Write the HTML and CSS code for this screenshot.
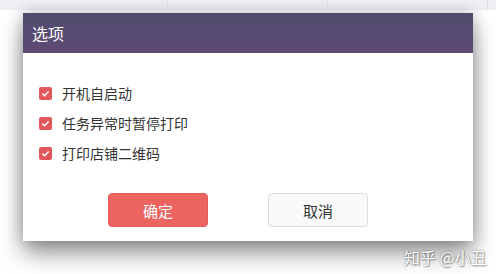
FILE: index.html
```html
<!DOCTYPE html>
<html>
<head>
<meta charset="utf-8">
<link rel="stylesheet" href="styles.css">
</head>
<body>
<div class="page">
  <div class="topbar">
    <div class="cell c1"></div>
    <div class="cell c2"></div>
    <div class="cell c3"></div>
    <div class="cell c4"></div>
  </div>
  <div class="dialog">
    <div class="dlg-head">选项</div>
    <div class="dlg-body">
      <label class="opt"><span class="cb"><svg viewBox="0 0 13 13" width="13" height="13"><path d="M3.4 6.6 L5.6 8.7 L9.6 4.4" fill="none" stroke="#fff" stroke-width="1.5"/></svg></span>开机自启动</label>
      <label class="opt"><span class="cb"><svg viewBox="0 0 13 13" width="13" height="13"><path d="M3.4 6.6 L5.6 8.7 L9.6 4.4" fill="none" stroke="#fff" stroke-width="1.5"/></svg></span>任务异常时暂停打印</label>
      <label class="opt"><span class="cb"><svg viewBox="0 0 13 13" width="13" height="13"><path d="M3.4 6.6 L5.6 8.7 L9.6 4.4" fill="none" stroke="#fff" stroke-width="1.5"/></svg></span>打印店铺二维码</label>
    </div>
    <div class="dlg-foot">
      <button class="btn btn-ok">确定</button>
      <button class="btn btn-cancel">取消</button>
    </div>
  </div>
  <div class="watermark">知乎 @小丑</div>
</div>
</body>
</html>
```
FILE: styles.css
```css
* { box-sizing: border-box; }
html, body { margin: 0; padding: 0; }
body {
  width: 496px;
  height: 274px;
  overflow: hidden;
  background: #ffffff;
  font-family: "Noto Sans CJK SC", "Noto Sans", sans-serif;
}
.page {
  position: relative;
  width: 496px;
  height: 274px;
}
.topbar {
  display: flex;
  height: 10px;
  background: #eef0f3;
}
.cell { border-right: 1px solid #d9dce1; height: 10px; }
.c1 { width: 168px; }
.c2 { width: 160px; }
.c3 { width: 160px; }
.c4 { flex: 1; border-right: none; }
.dialog {
  margin: 3px 0 0 23px;
  width: 450px;
  height: 228px;
  background: #fff;
  box-shadow: 0 12px 22px rgba(0,0,0,0.42), 0 0 14px rgba(0,0,0,0.2);
  display: flex;
  flex-direction: column;
}
.dlg-head {
  height: 40px;
  background: linear-gradient(#4e4c6d, #5f4a73);
  color: #fff;
  font-size: 16px;
  line-height: 40px;
  padding-left: 9px;
}
.dlg-body {
  display: flex;
  flex-direction: column;
  gap: 10px;
  padding: 30px 0 0 16px;
}
.opt {
  display: flex;
  align-items: center;
  height: 20px;
  font-size: 14px;
  color: #333;
  gap: 10px;
}
.cb {
  width: 13px;
  height: 13px;
  background: #e2575a;
  border-radius: 2px;
  display: block;
}
.cb svg { display: block; }
.dlg-foot {
  display: flex;
  gap: 60px;
  padding: 30px 0 0 85px;
}
.btn {
  width: 100px;
  height: 34px;
  border-radius: 4px;
  font-family: "Noto Sans CJK SC", "Noto Sans", sans-serif;
  font-size: 15px;
  padding: 0;
}
.btn-ok {
  background: #ec6460;
  border: 1px solid #e65b57;
  color: #fff;
}
.btn-cancel {
  background: #f9f9f9;
  border: 1px solid #dcdcdc;
  color: #333;
}
.watermark {
  position: absolute;
  left: 404px;
  top: 245px;
  font-size: 16px;
  color: #fff;
  text-shadow: 0 0 2px rgba(0,0,0,0.5), 1px 1px 1px rgba(0,0,0,0.3);
}
```
